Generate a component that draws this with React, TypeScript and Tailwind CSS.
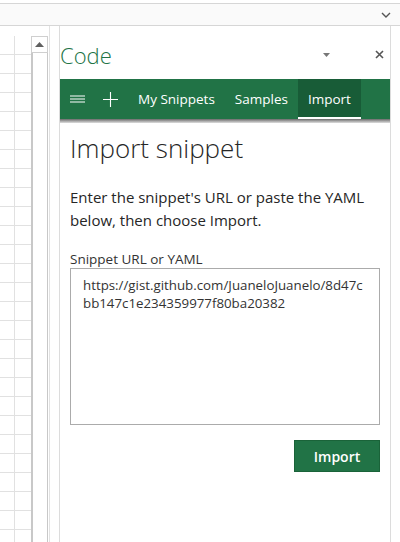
import React from "react";

const rows = Array.from({ length: 27 });

const App: React.FC = () => {
  return (
    <div className="w-[400px] h-[542px] overflow-hidden bg-white font-['Open_Sans',sans-serif] text-[#262626]">
      {/* formula bar */}
      <div className="pt-[3px]">
        <div className="h-[23px] border-y border-[#d6d6d6] bg-[#fafafa] flex items-center justify-end pr-[9px]">
          <svg width="10" height="6" viewBox="0 0 10 6">
            <path d="M1 1l4 4 4-4" stroke="#555" strokeWidth="1.4" fill="none" />
          </svg>
        </div>
      </div>

      <div className="flex h-[516px]">
        {/* sheet grid */}
        <div className="w-[31px] pt-[10px] flex flex-col">
          {rows.map((_, i) => (
            <div key={i} className="h-[19px] shrink-0 flex border-b border-[#e1e1e1]">
              <div className="w-[15px] border-r border-[#e1e1e1]" />
            </div>
          ))}
        </div>

        {/* vertical scrollbar */}
        <div className="w-[17px] pt-[10px] flex flex-col">
          <div className="h-[17px] border border-[#cfcfcf] flex items-center justify-center">
            <svg width="9" height="5" viewBox="0 0 9 5">
              <path d="M0 5L4.5 0 9 5z" fill="#606060" />
            </svg>
          </div>
          <div className="flex-1 border-l-2 border-r border-[#c8c8c8]" />
        </div>
        <div className="w-[11px] flex">
          <div className="ml-[1px] w-px bg-[#e2e2e2]" />
        </div>

        {/* task pane */}
        <div className="w-[332px] border-x border-[#dcdcdc] flex flex-col">
          <div className="h-[53px] flex items-center pt-[4px]">
            <span className="text-[22px] font-light text-[#217346] leading-none">Code</span>
            <svg className="ml-auto mr-[45px]" width="7" height="4" viewBox="0 0 7 4">
              <path d="M0 0h7L3.5 4z" fill="#777" />
            </svg>
            <svg className="mr-[6px]" width="9" height="9" viewBox="0 0 9 9">
              <path d="M1 1l7 7M8 1l-7 7" stroke="#555" strokeWidth="1.6" />
            </svg>
          </div>

          {/* nav */}
          <div className="h-[40px] bg-[#217346] flex items-stretch text-white text-[13.5px]">
            <div className="w-[33px] flex items-center justify-center pl-[1px]">
              <svg width="15" height="8" viewBox="0 0 15 8">
                <path d="M0 1h15M0 4h15M0 7h15" stroke="#fff" strokeWidth="1.2" />
              </svg>
            </div>
            <div className="w-[35px] flex items-center justify-center">
              <svg width="15" height="15" viewBox="0 0 15 15">
                <path d="M7.5 0v15M0 7.5h15" stroke="#fff" strokeWidth="1.1" />
              </svg>
            </div>
            <div className="px-[10px] flex items-center">My Snippets</div>
            <div className="px-[10px] flex items-center">Samples</div>
            <div className="px-[10px] flex items-center bg-[#185c37] border-b-2 border-white pt-[2px]">
              Import
            </div>
          </div>
          <div className="h-[4px] bg-[linear-gradient(#6a6a6a,#dedede)]" />

          {/* content */}
          <div className="px-[10px] flex flex-col">
            <h1 className="mt-[7px] text-[26px] leading-[36px] font-light text-[#262626]">
              Import snippet
            </h1>
            <p className="mt-[20px] text-[15px] leading-[23px] text-[#262626]">
              Enter the snippet's URL or paste the YAML below, then choose Import.
            </p>
            <label className="mt-[18px] text-[13.5px] leading-[18px] text-[#333]">Snippet URL or YAML</label>
            <div className="h-[157px] border border-[#ababab] px-[12px] pt-[7px] text-[13.3px] leading-[18px] text-[#333]">
              <div>https://gist.github.com/JuaneloJuanelo/8d47c</div>
              <div>bb147c1e234359977f80ba20382</div>
            </div>
            <div className="mt-[15px] flex justify-end">
              <button className="w-[86px] h-[32px] bg-[#217346] border border-[#1a6339] text-white text-[14px] font-semibold">
                Import
              </button>
            </div>
          </div>
        </div>
      </div>
    </div>
  );
};

export default App;
